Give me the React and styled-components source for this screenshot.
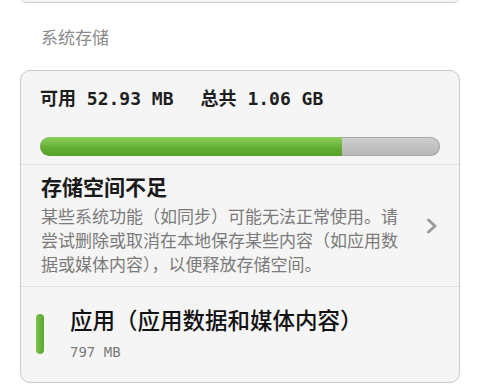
import React from 'react';
import styled, { createGlobalStyle } from 'styled-components';

const GlobalStyle = createGlobalStyle`
  body {
    margin: 0;
    background: #fff;
    font-family: "DejaVu Sans Mono", "Noto Sans CJK SC", monospace;
  }
`;

const Page = styled.div`
  width: 480px;
  height: 385px;
  overflow: hidden;
  display: flex;
  flex-direction: column;
`;

const PrevCard = styled.div`
  margin: -9px 20px 0;
  height: 10px;
  border: 1px solid #cfcfcf;
  border-radius: 10px;
  background: #f6f6f6;
`;

const SectionTitle = styled.div`
  margin: 23px 0 0 41px;
  font-size: 17px;
  line-height: 24px;
  color: #8a8a8a;
`;

const Card = styled.div`
  margin: 20px 20px 0;
  border: 1px solid #c9c9c9;
  border-radius: 10px;
  background: #f5f5f5;
  display: flex;
  flex-direction: column;
`;

const Section = styled.div`
  padding: ${({ pad }) => pad};
  border-top: ${({ divided }) => (divided ? '1px solid #dedede' : 'none')};
  display: flex;
  flex-direction: ${({ row }) => (row ? 'row' : 'column')};
  align-items: ${({ row }) => (row ? 'center' : 'stretch')};
`;

const Summary = styled.div`
  display: flex;
  gap: 27px;
  font-size: 18px;
  line-height: 26px;
  font-weight: bold;
  color: #1e1e1e;
`;

const Bar = styled.div`
  margin-top: 25px;
  height: 19px;
  border-radius: 10px;
  background: linear-gradient(#cfcfcf, #b5b5b5);
  box-shadow: inset 0 0 0 1px #a9a9a9;
  display: flex;
  overflow: hidden;
`;

const BarFill = styled.div`
  height: 100%;
  border-radius: 10px 0 0 10px;
  background: linear-gradient(#8cce5c, #62ad32 60%, #56a02a);
`;

const Warning = styled.div`
  flex: 1;
  display: flex;
  flex-direction: column;
`;

const WarnTitle = styled.div`
  font-size: 21px;
  line-height: 28px;
  font-weight: bold;
  color: #1a1a1a;
`;

const WarnText = styled.div`
  margin-top: 3px;
  width: 360px;
  font-size: 17px;
  line-height: 24px;
  color: #7a7a7a;
`;

const Chevron = styled.svg`
  width: 12px;
  height: 16px;
  flex: none;
`;

const Swatch = styled.div`
  width: 8px;
  height: 40px;
  border-radius: 4px;
  background: linear-gradient(90deg, #7cc24c, #5aa62c);
  flex: none;
  margin-right: 26px;
`;

const AppInfo = styled.div`
  display: flex;
  flex-direction: column;
`;

const AppName = styled.div`
  font-size: 22.5px;
  line-height: 30px;
  font-weight: 500;
  color: #111;
`;

const AppSize = styled.div`
  margin-top: 7px;
  font-size: 14px;
  line-height: 18px;
  color: #7a7a7a;
`;

export default function App() {
  const used = 0.755;
  return (
    <Page>
      <GlobalStyle />
      <PrevCard />
      <SectionTitle>系统存储</SectionTitle>
      <Card>
        <Section pad="15px 19px 8px">
          <Summary>
            <span>可用 52.93 MB</span>
            <span>总共 1.06 GB</span>
          </Summary>
          <Bar>
            <BarFill style={{ width: `${used * 100}%` }} />
          </Bar>
        </Section>
        <Section divided row pad="9px 21px 9px 20px">
          <Warning>
            <WarnTitle>存储空间不足</WarnTitle>
            <WarnText>
              某些系统功能（如同步）可能无法正常使用。请尝试删除或取消在本地保存某些内容（如应用数据或媒体内容），以便释放存储空间。
            </WarnText>
          </Warning>
          <Chevron viewBox="0 0 12 16">
            <path d="M2.5 2 L9 8 L2.5 14" fill="none" stroke="#9c9c9c" strokeWidth="3" strokeLinecap="round" strokeLinejoin="round" />
          </Chevron>
        </Section>
        <Section divided row pad="19px 15px 21px">
          <Swatch />
          <AppInfo>
            <AppName>应用（应用数据和媒体内容）</AppName>
            <AppSize>797 MB</AppSize>
          </AppInfo>
        </Section>
      </Card>
    </Page>
  );
}
